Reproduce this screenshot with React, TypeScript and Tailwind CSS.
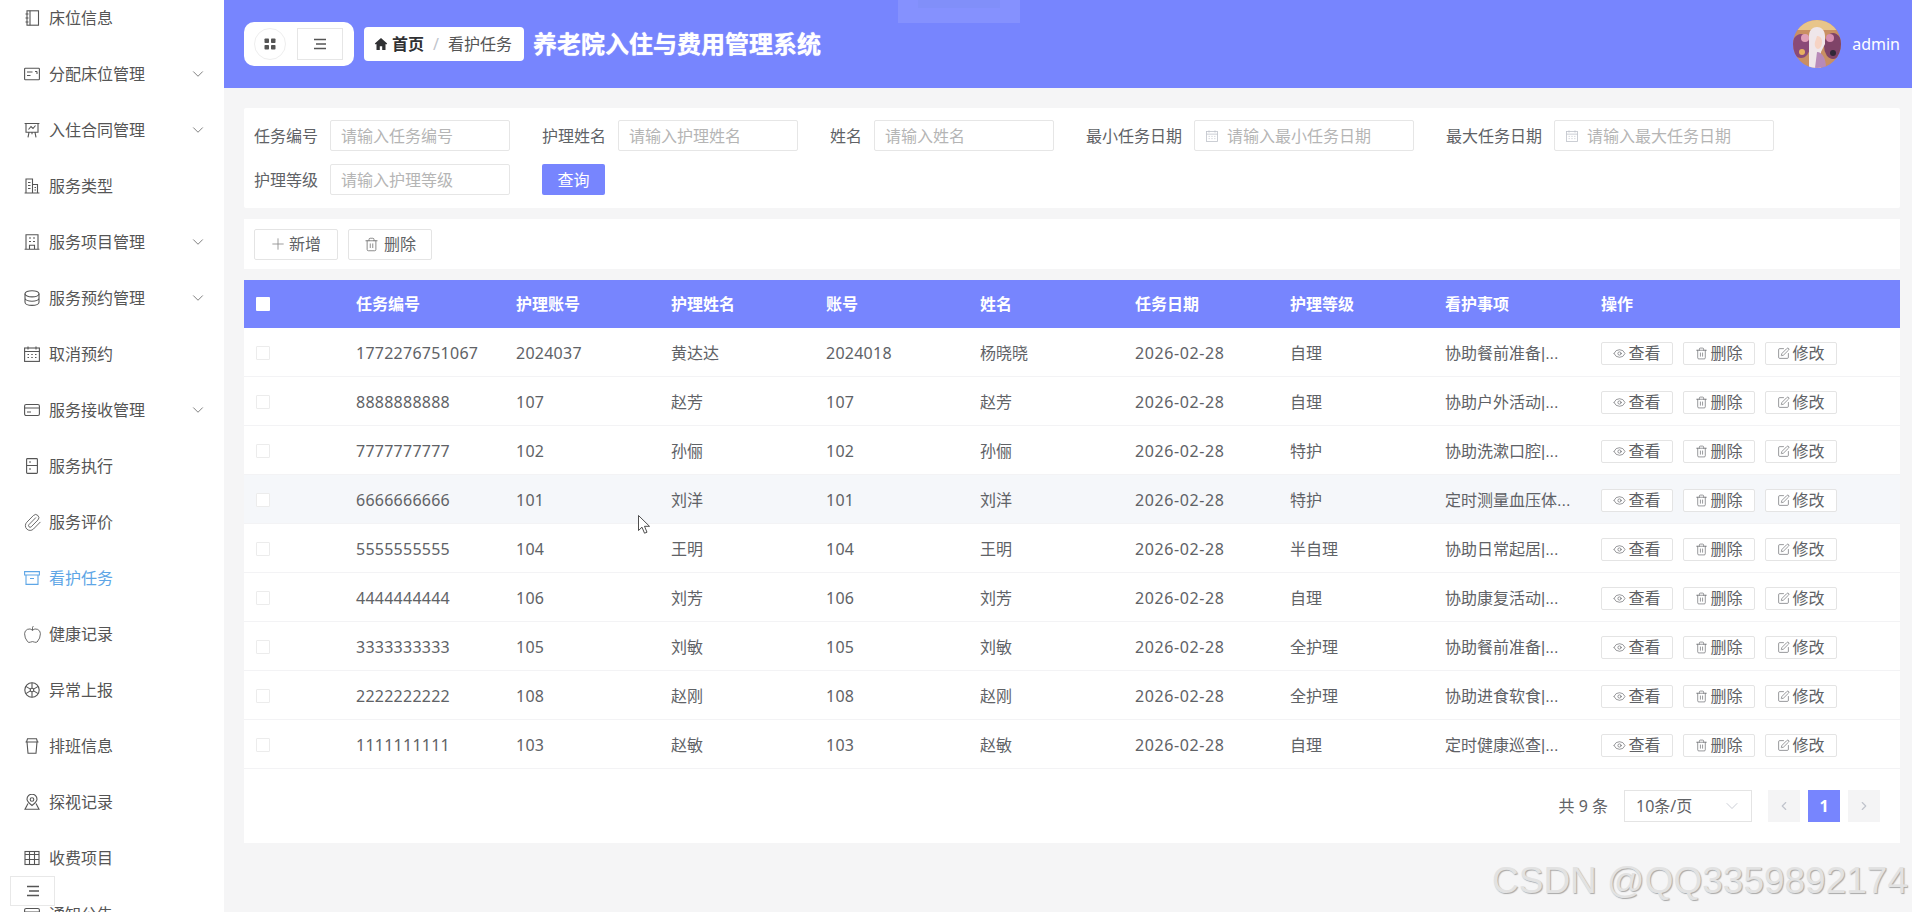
import type { ReactNode } from "react";
import { Apple, ChevronDown, ChevronLeft, ChevronRight, Eye, Paperclip, Plus, SquarePen, Trash2 } from "lucide-react";

const FONT = "font-['Noto_Sans','Noto_Sans_CJK_SC',sans-serif]";

function Svg({ children }: { children: ReactNode }) {
  return (
    <svg
      viewBox="0 0 16 16"
      fill="none"
      stroke="currentColor"
      strokeWidth="1.1"
      className="size-4 shrink-0"
    >
      {children}
    </svg>
  );
}

const NotebookIcon = () => (
  <Svg>
    <rect x="3" y="0.8" width="11.500" height="14.400" />
    <path d="M6 .8v14.400M1.500 4h3M1.500 8h3M1.500 12h3" />
  </Svg>
);
const PostcardIcon = () => (
  <Svg>
    <rect x="0.600" y="2.200" width="14.800" height="11.600" rx="0.800" />
    <path d="M3 6h5.500M3 9.500h3.500M11 5.500h2M13 5.500v2.500" />
  </Svg>
);
const BoardIcon = () => (
  <Svg>
    <path d="M.6 1.500h14.800M2 1.500v8.800h12V1.500M8 10.300v2M5 10.300l-1 5M11 10.300l1 5M4.500 7.500l2.500-3 2 2 2.500-3" />
  </Svg>
);
const OfficeIcon = () => (
  <Svg>
    <path d="M.6 15h14.800M2 15V1h6.500v14M8.500 6.500h5V15M4 4.500h2.500M4 7.500h2.500M4 10.500h2.500M10.500 9.500h1.500M10.500 12h1.500" />
  </Svg>
);
const SchoolIcon = () => (
  <Svg>
    <path d="M.6 15.200h14.800M2 15.200V.8h12v14.400M5.500 15.200v-4h5v4M5 4h2M9 4h2M5 7.500h2M9 7.500h2" />
  </Svg>
);
const CoinIcon = () => (
  <Svg>
    <ellipse cx="8" cy="3.800" rx="7" ry="3.100" />
    <path d="M1 3.800v8.400c0 1.800 3.100 3.200 7 3.200s7-1.400 7-3.200V3.800M1 8c0 1.800 3.100 3.200 7 3.200S15 9.800 15 8" />
  </Svg>
);
const CalendarIcon = () => (
  <Svg>
    <rect x="0.600" y="2" width="14.800" height="13.400" />
    <path d="M.6 5.500h14.800M4 .6v2.800M12 .6v2.800M3.500 8.500H5M7.250 8.500h1.500M11 8.500h1.500M3.500 11.500H5M7.250 11.500h1.500M11 11.500h1.500" />
  </Svg>
);
const CardIcon = () => (
  <Svg>
    <rect x="0.600" y="2.500" width="14.800" height="11" rx="1.500" />
    <path d="M.6 6h14.800M3 10h4" />
  </Svg>
);
const PhoneIcon = () => (
  <Svg>
    <rect x="2.600" y="0.600" width="10.800" height="14.800" rx="0.800" />
    <path d="M2.600 7.500h10.800M5 4h2M5 11h2" />
  </Svg>
);
const BoxIcon = () => (
  <Svg>
    <path d="M.6 1.600h14.800v3.400H.6zM2 5v9.400h12V5M6 8.500h4" />
  </Svg>
);
const BallIcon = () => (
  <Svg>
    <circle cx="8" cy="8" r="7.200" />
    <circle cx="8" cy="8" r="1.800" />
    <path d="M8 .8v5.400M8 9.800v5.400M1.800 4.400l4.600 2.700M9.600 8.900l4.600 2.700M14.200 4.400 9.600 7.100M6.400 8.900l-4.600 2.700" />
  </Svg>
);
const CupIcon = () => (
  <Svg>
    <path d="M1.500 4h13M3 4l1 11.300h8L13 4M3.500 .8h9l1 3.200h-11z" />
  </Svg>
);
const PinIcon = () => (
  <Svg>
    <circle cx="8" cy="5.500" r="1.800" />
    <path d="M8 11.500C5 9 3 7.500 3 5.200a5 5 0 0 1 10 0C13 7.500 11 9 8 11.500zM4 9.500 1 15.300h14L12 9.500" />
  </Svg>
);
const GridIcon = () => (
  <Svg>
    <rect x="1" y="1.500" width="14" height="13" />
    <path d="M1 4.500h14M5.500 1.500v13M10.500 1.500v13M1 9.500h14" />
  </Svg>
);
const FoldIcon = () => (
  <svg viewBox="0 0 16 16" fill="none" stroke="currentColor" strokeWidth="1.400" className="size-4">
    <path d="M2 3.500h12M4 8h10M2 12.500h12" />
  </svg>
);

const lucideCls = "-m-[1.500px] size-[19px] shrink-0";

type MenuEntry = {
  label: string;
  icon: ReactNode;
  arrow?: boolean;
  active?: boolean;
};

const MENU: MenuEntry[] = [
  { label: "床位信息", icon: <NotebookIcon /> },
  { label: "分配床位管理", icon: <PostcardIcon />, arrow: true },
  { label: "入住合同管理", icon: <BoardIcon />, arrow: true },
  { label: "服务类型", icon: <OfficeIcon /> },
  { label: "服务项目管理", icon: <SchoolIcon />, arrow: true },
  { label: "服务预约管理", icon: <CoinIcon />, arrow: true },
  { label: "取消预约", icon: <CalendarIcon /> },
  { label: "服务接收管理", icon: <CardIcon />, arrow: true },
  { label: "服务执行", icon: <PhoneIcon /> },
  { label: "服务评价", icon: <Paperclip className={lucideCls} strokeWidth={1.100} /> },
  { label: "看护任务", icon: <BoxIcon />, active: true },
  { label: "健康记录", icon: <Apple className={lucideCls} strokeWidth={1.100} /> },
  { label: "异常上报", icon: <BallIcon /> },
  { label: "排班信息", icon: <CupIcon /> },
  { label: "探视记录", icon: <PinIcon /> },
  { label: "收费项目", icon: <GridIcon /> },
  { label: "通知公告", icon: <CardIcon /> },
];

const ROWS = [
  ["1772276751067", "2024037", "黄达达", "2024018", "杨晓晓", "自理", "协助餐前准备", "|..."],
  ["8888888888", "107", "赵芳", "107", "赵芳", "自理", "协助户外活动", "|..."],
  ["7777777777", "102", "孙俪", "102", "孙俪", "特护", "协助洗漱口腔", "|..."],
  ["6666666666", "101", "刘洋", "101", "刘洋", "特护", "定时测量血压体", "..."],
  ["5555555555", "104", "王明", "104", "王明", "半自理", "协助日常起居", "|..."],
  ["4444444444", "106", "刘芳", "106", "刘芳", "自理", "协助康复活动", "|..."],
  ["3333333333", "105", "刘敏", "105", "刘敏", "全护理", "协助餐前准备", "|..."],
  ["2222222222", "108", "赵刚", "108", "赵刚", "全护理", "协助进食软食", "|..."],
  ["1111111111", "103", "赵敏", "103", "赵敏", "自理", "定时健康巡查", "|..."],
];

const COLS =
  "grid grid-cols-[100px_160px_155px_155px_154px_155px_155px_155px_156px_1fr] items-center";

function Field({
  label,
  placeholder,
  width,
  date,
}: {
  label: string;
  placeholder: string;
  width: string;
  date?: boolean;
}) {
  return (
    <div className="flex items-center gap-3">
      <span className="text-[#606266]">{label}</span>
      <div
        className={`flex h-[31px] items-center rounded-[2px] border border-[#e6e6e6] text-[#b5b5b5] ${width} ${date ? "gap-[9px] px-[11px]" : "px-[10px]"}`}
      >
        {date ? (
          <span className="text-[#c0c4cc] [&_svg]:size-3">
            <CalendarIcon />
          </span>
        ) : null}
        <span>{placeholder}</span>
      </div>
    </div>
  );
}

function ActionButton({ icon, label }: { icon: ReactNode; label: string }) {
  return (
    <button
      type="button"
      className="flex h-[23px] w-[72px] items-center justify-center gap-[2px] rounded-[2px] border border-[#e4e4e4] bg-white leading-none text-[#606266]"
    >
      {icon}
      {label}
    </button>
  );
}

function Avatar() {
  return (
    <svg viewBox="0 0 48 48" className="size-12 shrink-0 rounded-full">
      <rect width="48" height="48" fill="#c98f63" />
      <rect y="0" width="48" height="10" fill="#e8c58a" />
      <ellipse cx="8" cy="26" rx="9" ry="12" fill="#8a4a78" />
      <ellipse cx="40" cy="26" rx="9" ry="13" fill="#7f4368" />
      <circle cx="12" cy="18" r="4" fill="#e0a0b8" />
      <circle cx="37" cy="18" r="4" fill="#d890b0" />
      <circle cx="9" cy="32" r="3" fill="#e8b060" />
      <circle cx="40" cy="33" r="3" fill="#302838" />
      <path d="M16 48V16c0-6 4-9 8-9s8 3 8 9v8l-4 8v16z" fill="#efe6ea" />
      <path d="M24 16c3 0 5 2 5 6s-2 7-4 7-4-3-3-7z" fill="#f6d3c4" />
      <path d="M24 32c5 0 9 6 9 16H22z" fill="#b88ab8" />
    </svg>
  );
}

export default function App() {
  return (
    <div className={`relative flex h-[912px] w-[1912px] overflow-hidden bg-[#f5f5f6] text-base ${FONT}`}>
      <aside className="relative h-full w-[224px] shrink-0 overflow-hidden bg-white">
        <div className="-mt-[10px]">
          {MENU.map((item) => (
            <div
              key={item.label}
              className={`flex h-14 items-center gap-[9px] pl-6 pr-[17px] ${item.active ? "text-[#5ea6e6]" : "text-[#555]"}`}
            >
              {item.icon}
              <span className="flex-1">{item.label}</span>
              {item.arrow ? <ChevronDown className="size-[18px]" strokeWidth={1} /> : null}
            </div>
          ))}
        </div>
        <div className="absolute left-[10px] top-[876px] flex h-[30px] w-[45px] items-center justify-center border border-[#e8e8e8] bg-white text-[#555]">
          <FoldIcon />
        </div>
      </aside>

      <main className="min-w-0 flex-1">
        <header className="relative flex h-[88px] items-center bg-[#7785fe] pl-5 pr-[12px]">
          <div className="flex h-[44px] w-[110px] items-center gap-[11px] rounded-[10px] bg-white pl-[10px]">
            <div className="flex size-8 items-center justify-center rounded-full border border-[#eee]">
              <svg viewBox="0 0 12 12" className="size-3 fill-[#555]">
                <rect x="0.500" y="0.500" width="4.500" height="4.500" rx="0.800" />
                <rect x="7" y="0.500" width="4.500" height="4.500" rx="0.800" />
                <rect x="0.500" y="7" width="4.500" height="4.500" rx="0.800" />
                <rect x="7" y="7" width="4.500" height="4.500" rx="0.800" />
              </svg>
            </div>
            <div className="flex h-8 w-[46px] items-center justify-center border border-[#e6e6e6] text-[#555]">
              <FoldIcon />
            </div>
          </div>
          <div className="ml-[10px] flex h-[34px] items-center rounded-[4px] bg-white pl-[10px] pr-3 text-[#303133]">
            <svg viewBox="0 0 14 14" className="mr-1 size-3.5 fill-[#303133]">
              <path d="M7 1 .8 6.500l1 1L2.500 7v6h3.300V9.300h2.400V13h3.300V7l.7.5 1-1z" />
            </svg>
            <span className="font-semibold">首页</span>
            <span className="mx-[9px] text-[#c0c4cc]">/</span>
            <span className="text-[#555]">看护任务</span>
          </div>
          <h1 className="ml-[9px] text-2xl font-bold text-white [text-shadow:0_0_1px_#fff]">养老院入住与费用管理系统</h1>
          <div className="ml-auto flex items-center gap-[11px]">
            <Avatar />
            <span className="text-white">admin</span>
          </div>
          {/* toast fading out at the moment of capture */}
          <div className="absolute left-[674px] top-0 h-[23px] w-[122px] bg-white/10 px-5">
            <div className="h-2 bg-[#7a8cf0]/30" />
          </div>
        </header>

        <div className="pl-5 pr-3 pt-5">
          <section className="flex flex-wrap gap-x-8 gap-y-[13px] rounded-[2px] bg-white pb-[13px] pl-[10px] pt-3">
            <Field label="任务编号" placeholder="请输入任务编号" width="w-[180px]" />
            <Field label="护理姓名" placeholder="请输入护理姓名" width="w-[180px]" />
            <Field label="姓名" placeholder="请输入姓名" width="w-[180px]" />
            <Field label="最小任务日期" placeholder="请输入最小任务日期" width="w-[220px]" date />
            <Field label="最大任务日期" placeholder="请输入最大任务日期" width="w-[220px]" date />
            <Field label="护理等级" placeholder="请输入护理等级" width="w-[180px]" />
            <button
              type="button"
              className="h-[31px] w-[63px] rounded-[2px] bg-[#7785fe] text-white"
            >
              查询
            </button>
          </section>

          <section className="mt-[11px] flex h-[50px] items-center gap-[10px] bg-white pl-[10px]">
            <button
              type="button"
              className="flex h-[31px] w-[84px] items-center justify-center gap-[2px] rounded-[2px] border border-[#e4e4e4] text-[#606266]"
            >
              <Plus className="-ml-[2px] size-[18px] text-[#888]" strokeWidth={1.100} />
              新增
            </button>
            <button
              type="button"
              className="flex h-[31px] w-[84px] items-center justify-center gap-[5px] rounded-[2px] border border-[#e4e4e4] text-[#606266]"
            >
              <Trash2 className="size-[15px] text-[#666]" strokeWidth={1.200} />
              删除
            </button>
          </section>

          <section className="mt-[11px] bg-white pb-[21px]">
            <div className={`${COLS} h-12 bg-[#7785fe] font-bold text-white`}>
              <div className="pl-3">
                <div className="size-[14px] rounded-[1px] bg-white" />
              </div>
              {["任务编号", "护理账号", "护理姓名", "账号", "姓名", "任务日期", "护理等级", "看护事项", "操作"].map(
                (h) => (
                  <div key={h} className="pl-3">
                    {h}
                  </div>
                ),
              )}
            </div>

            {ROWS.map((row) => (
              <div
                key={row[0]}
                className={`${COLS} h-[49px] border-b border-[#f3f3f5] pt-[2px] text-[#606266] ${row[0] === "6666666666" ? "bg-[#f5f7fa]" : ""}`}
              >
                <div className="pl-3">
                  <div className="size-[14px] rounded-[1px] border border-[#ececec] bg-white" />
                </div>
                <div className="pl-3 tracking-[0.25px]">{row[0]}</div>
                <div className="pl-3 tracking-[0.25px]">{row[1]}</div>
                <div className="pl-3">{row[2]}</div>
                <div className="pl-3 tracking-[0.25px]">{row[3]}</div>
                <div className="pl-3">{row[4]}</div>
                <div className="pl-3 tracking-[0.600px]">2026-02-28</div>
                <div className="pl-3">{row[5]}</div>
                <div className="pl-3">
                  {row[6]}
                  <span className="font-['Liberation_Sans',sans-serif]">{row[7]}</span>
                </div>
                <div className="flex gap-[10px] pl-3">
                  <ActionButton icon={<Eye className="size-[13px]" strokeWidth={1.200} />} label="查看" />
                  <ActionButton icon={<Trash2 className="size-[13px]" strokeWidth={1.200} />} label="删除" />
                  <ActionButton icon={<SquarePen className="size-[13px]" strokeWidth={1.200} />} label="修改" />
                </div>
              </div>
            ))}

            <div className="mt-[21px] flex h-8 items-center justify-end pr-5 text-[#606266]">
              <span>共 9 条</span>
              <div className="ml-4 flex h-8 w-[128px] items-center justify-between border border-[#e4e4e4] pl-[11px] pr-[9px]">
                10条/页
                <ChevronDown className="size-5 text-[#c0c4cc]" strokeWidth={1} />
              </div>
              <div className="ml-4 flex size-8 items-center justify-center bg-[#f4f4f5] text-[#c0c4cc]">
                <ChevronLeft className="size-3.5" />
              </div>
              <div className="ml-2 flex size-8 items-center justify-center bg-[#7785fe] font-bold text-white">1</div>
              <div className="ml-2 flex size-8 items-center justify-center bg-[#f4f4f5] text-[#c0c4cc]">
                <ChevronRight className="size-3.5" />
              </div>
            </div>
          </section>
        </div>
      </main>

      {/* mouse pointer caught in the capture */}
      <svg viewBox="0 0 12 20" className="pointer-events-none absolute left-[638px] top-[515px] h-5 w-3">
        <path d="M.5.500v15l3.500-3.300 2.500 6 2.500-1-2.500-5.900h5z" fill="#fff" stroke="#222" strokeWidth="0.800" />
      </svg>

      {/* csdn watermark, baked into the capture */}
      <div className="pointer-events-none absolute bottom-[13px] right-[4px] font-['Liberation_Sans',sans-serif] text-[37px] leading-none text-[#e2e2e2] [text-shadow:1px_1px_1px_#a8a8a8]">
        CSDN @QQ3359892174
      </div>
    </div>
  );
}
